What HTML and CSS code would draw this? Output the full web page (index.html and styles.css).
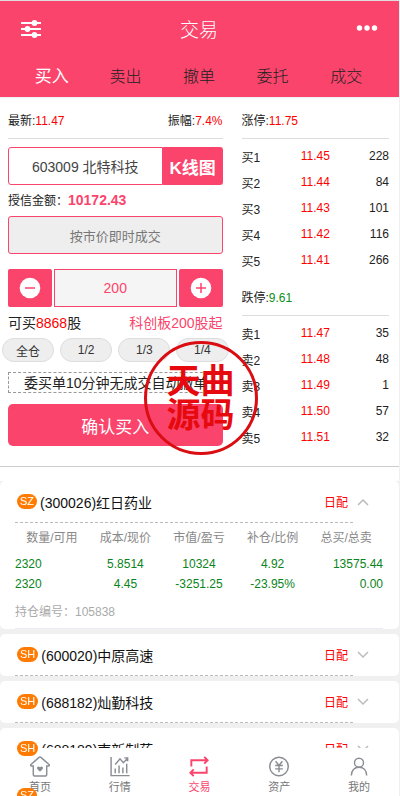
FILE: index.html
```html
<!DOCTYPE html>
<html lang="zh-CN">
<head>
    <meta charset="UTF-8">
    <meta name="viewport" content="width=device-width, initial-scale=1.0">
    <title>交易</title>
    <link rel="stylesheet" href="styles.css">
</head>
<body>
    <header class="header">
        <div class="title-bar">
            <button class="icon-btn" type="button" aria-label="设置">
                <svg width="22" height="18" viewBox="0 0 22 18" fill="#fff" stroke="#fff" stroke-width="2">
                    <path d="M1 3h20M1 9h20M1 15h20"/>
                    <circle cx="14.500" cy="3" r="1.900"/>
                    <circle cx="7.500" cy="9" r="1.900"/>
                    <circle cx="14.500" cy="15" r="1.900"/>
                </svg>
            </button>
            <h1>交易</h1>
            <button class="icon-btn" type="button" aria-label="更多">
                <svg width="22" height="18" viewBox="0 0 22 18" fill="#fff">
                    <circle cx="3.500" cy="8" r="2.700"/>
                    <circle cx="11" cy="8" r="2.700"/>
                    <circle cx="18.500" cy="8" r="2.700"/>
                </svg>
            </button>
        </div>
        <nav class="tabs">
            <a class="active" href="#buy">买入</a>
            <a href="#sell">卖出</a>
            <a href="#cancel">撤单</a>
            <a href="#orders">委托</a>
            <a href="#deals">成交</a>
        </nav>
    </header>

    <main class="content">
        <section class="trade">
            <form class="order">
                <div class="quote">
                    <span>最新:<span class="red">11.47</span></span>
                    <span>振幅:<span class="red">7.4%</span></span>
                </div>
                <div class="stock">
                    <input type="text" value="603009 北特科技" aria-label="股票代码">
                    <button type="button">K线图</button>
                </div>
                <p class="credit">授信金额：<b>10172.43</b></p>
                <input class="price" type="text" value="按市价即时成交" aria-label="委托价格" readonly>
                <div class="stepper">
                    <button type="button" aria-label="减少">
                        <svg width="22" height="22" viewBox="0 0 22 22">
                            <circle cx="11" cy="11" r="10.300" fill="#fff"/>
                            <path d="M6 11h10" stroke="#fb446c" stroke-width="1.500"/>
                        </svg>
                    </button>
                    <input type="text" value="200" aria-label="委托数量">
                    <button type="button" aria-label="增加">
                        <svg width="22" height="22" viewBox="0 0 22 22">
                            <circle cx="11" cy="11" r="10.300" fill="#fff"/>
                            <path d="M6 11h10M11 6v10" stroke="#fb446c" stroke-width="1.500"/>
                        </svg>
                    </button>
                </div>
                <div class="available">
                    <span>可买<span class="red">8868</span>股</span>
                    <span class="pink">科创板200股起</span>
                </div>
                <div class="portions">
                    <button type="button">全仓</button>
                    <button type="button">1/2</button>
                    <button type="button">1/3</button>
                    <button type="button">1/4</button>
                </div>
                <p class="notice">委买单10分钟无成交自动撤单</p>
                <button class="confirm" type="button">确认买入</button>
            </form>

            <div class="book">
                <div class="quote"><span>涨停:<span class="red">11.75</span></span></div>
                <table>
                    <tr><th>买1</th><td>11.45</td><td>228</td></tr>
                    <tr><th>买2</th><td>11.44</td><td>84</td></tr>
                    <tr><th>买3</th><td>11.43</td><td>101</td></tr>
                    <tr><th>买4</th><td>11.42</td><td>116</td></tr>
                    <tr><th>买5</th><td>11.41</td><td>266</td></tr>
                </table>
                <div class="quote lower"><span>跌停:<span class="green">9.61</span></span></div>
                <table>
                    <tr><th>卖1</th><td>11.47</td><td>35</td></tr>
                    <tr><th>卖2</th><td>11.48</td><td>48</td></tr>
                    <tr><th>卖3</th><td>11.49</td><td>1</td></tr>
                    <tr><th>卖4</th><td>11.50</td><td>57</td></tr>
                    <tr><th>卖5</th><td>11.51</td><td>32</td></tr>
                </table>
            </div>

            <div class="stamp">天曲<br>源码</div>
        </section>

        <section class="holdings">
            <article class="card">
                <div class="card-head">
                    <div class="card-name">
                        <span class="badge">SZ</span>
                        <span class="name">(300026)红日药业</span>
                        <span class="tag">日配</span>
                    </div>
                    <button type="button" aria-label="收起">
                        <svg width="12" height="8" viewBox="0 0 12 8"><path d="M1 7l5-5 5 5"/></svg>
                    </button>
                </div>
                <table class="detail">
                    <thead>
                        <tr><th>数量/可用</th><th>成本/现价</th><th>市值/盈亏</th><th>补仓/比例</th><th>总买/总卖</th></tr>
                    </thead>
                    <tbody>
                        <tr><td>2320</td><td>5.8514</td><td>10324</td><td>4.92</td><td>13575.44</td></tr>
                        <tr><td>2320</td><td>4.45</td><td>-3251.25</td><td>-23.95%</td><td>0.00</td></tr>
                    </tbody>
                </table>
                <p class="serial">持仓编号：105838</p>
            </article>
            <article class="card">
                <div class="card-head">
                    <div class="card-name">
                        <span class="badge">SH</span>
                        <span class="name">(600020)中原高速</span>
                        <span class="tag">日配</span>
                    </div>
                    <button type="button" aria-label="展开">
                        <svg width="12" height="8" viewBox="0 0 12 8"><path d="M1 1l5 5 5-5"/></svg>
                    </button>
                </div>
            </article>
            <article class="card">
                <div class="card-head">
                    <div class="card-name">
                        <span class="badge">SH</span>
                        <span class="name">(688182)灿勤科技</span>
                        <span class="tag">日配</span>
                    </div>
                    <button type="button" aria-label="展开">
                        <svg width="12" height="8" viewBox="0 0 12 8"><path d="M1 1l5 5 5-5"/></svg>
                    </button>
                </div>
            </article>
            <article class="card">
                <div class="card-head">
                    <div class="card-name">
                        <span class="badge">SH</span>
                        <span class="name">(688189)南新制药</span>
                        <span class="tag">日配</span>
                    </div>
                    <button type="button" aria-label="展开">
                        <svg width="12" height="8" viewBox="0 0 12 8"><path d="M1 1l5 5 5-5"/></svg>
                    </button>
                </div>
            </article>
            <article class="card">
                <div class="card-head">
                    <div class="card-name">
                        <span class="badge">SZ</span>
                    </div>
                </div>
            </article>
        </section>
    </main>

    <nav class="tabbar">
        <a href="#home">
            <svg width="24" height="24" viewBox="0 0 24 24">
                <path d="M5 11.500H3.200c-1 0-1.300-.8-.6-1.500L11 2.500c.6-.6 1.400-.6 2 0l8.400 7.500c.7.700.4 1.500-.6 1.500H19V20c0 1.300-.7 2-2 2H7c-1.300 0-2-.7-2-2z"/>
                <path class="solid" d="M12 17.500l-2.600-2.600c-1.600-1.800.9-3.900 2.600-2.100 1.700-1.800 4.200.3 2.600 2.100z"/>
            </svg>
            首页
        </a>
        <a href="#market">
            <svg width="24" height="24" viewBox="0 0 24 24">
                <path d="M2.700 2v19.500H22M7 10l5-6 3.500 4L20 3.500M16.500 3H20v3.500M7 19v-5M11 19v-8M15 19v-6M19 19V9"/>
            </svg>
            行情
        </a>
        <a class="active" href="#trade">
            <svg width="24" height="24" viewBox="0 0 24 24">
                <path d="M4 12V5.500h17M17.500 2L21 5.500 17.500 9M20 12v6.500H3M6.500 15L3 18.500 6.500 22"/>
            </svg>
            交易
        </a>
        <a href="#assets">
            <svg width="24" height="24" viewBox="0 0 24 24">
                <circle cx="12" cy="12" r="9.700"/>
                <path d="M8.500 6.500L12 11l3.500-4.500M12 11v7M8 11h8M8 14.500h8"/>
            </svg>
            资产
        </a>
        <a href="#me">
            <svg width="24" height="24" viewBox="0 0 24 24">
                <circle cx="12" cy="8" r="4.700"/>
                <path d="M4 21.500c0-5.500 3.200-8.800 8-8.800s8 3.300 8 8.800"/>
            </svg>
            我的
        </a>
    </nav>
</body>
</html>
```
FILE: styles.css
```css
* {
    box-sizing: border-box;
}
body {
    margin: 0;
    height: 100vh;
    display: flex;
    flex-direction: column;
    overflow: hidden;
    border-right: 1px solid #f0f0f0;
    background: #fff;
    color: #222;
    font-family: "Liberation Sans", "Noto Sans CJK SC", sans-serif;
    font-size: 12px;
}
h1, p {
    margin: 0;
    font-weight: 400;
}
a {
    text-decoration: none;
}
button, input {
    margin: 0;
    padding: 0;
    border: none;
    font-family: inherit;
}
input {
    min-width: 0;
    text-align: center;
    outline: none;
}
button {
    cursor: pointer;
}
svg {
    display: block;
}
.red {
    color: #f00;
}
.green {
    color: #0a8f14;
}
.pink {
    color: #fb446c;
}

/* header */
.header {
    flex: none;
    border-top: 1px solid #ddd;
    background: #fb446c;
    color: #fff;
    box-shadow: 0 1px 2px #e8eef5;
}
.title-bar {
    display: flex;
    align-items: center;
    justify-content: space-between;
    height: 55px;
    padding: 0 21px 0 20px;
}
.title-bar h1 {
    font-size: 19px;
    font-weight: 300;
}
.icon-btn {
    background: none;
}
.tabs {
    display: flex;
    height: 41px;
    padding: 0 16px 0 15px;
    line-height: 41px;
}
.tabs a {
    flex: 1;
    text-align: center;
    font-size: 16px;
    font-weight: 300;
    color: #222;
}
.tabs .active {
    font-size: 17px;
    font-weight: 400;
    color: #fff;
}

/* order form and order book */
.content {
    flex: 1;
    min-height: 0;
    overflow-y: auto;
    scrollbar-width: none;
}
.trade {
    position: relative;
    display: grid;
    grid-template-columns: 16fr 11fr;
    gap: 19px;
    padding: 7px 10px 16px 8px;
    border-bottom: 1px solid #ccc;
}
.order, .book {
    min-width: 0;
}
.quote {
    display: flex;
    justify-content: space-between;
    height: 35px;
    line-height: 34px;
    border-bottom: 1px solid #ddd;
}
.stock {
    display: flex;
    height: 38px;
    margin-top: 8px;
}
.stock input {
    flex: 1;
    border: 1px solid #fb446c;
    border-radius: 3px 0 0 3px;
    font-size: 14px;
    color: #444;
}
.stock button {
    width: 60px;
    border-radius: 0 3px 3px 0;
    background: #fb446c;
    color: #fff;
    font-size: 17px;
    font-weight: 700;
}
.credit {
    height: 31px;
    line-height: 31px;
}
.credit b {
    font-size: 14px;
    color: #fb446c;
}
.price {
    display: block;
    width: 100%;
    height: 38px;
    border: 1px solid #fb446c;
    border-radius: 3px;
    background: #eee;
    color: #777;
    font-size: 13px;
}
.stepper {
    display: flex;
    gap: 2px;
    height: 38px;
    margin-top: 15px;
}
.stepper input {
    flex: 1;
    border: 1px solid #fb446c;
    background: #f5f5f5;
    color: #fb446c;
    font-size: 14px;
}
.stepper button {
    display: flex;
    align-items: center;
    justify-content: center;
    width: 44px;
    border-radius: 2px;
    background: #fb446c;
}
.available {
    display: flex;
    justify-content: space-between;
    height: 31px;
    line-height: 33px;
    font-size: 14px;
}
.portions {
    display: flex;
    gap: 6px;
    margin: 0 -6px;
}
.portions button {
    flex: 1;
    height: 24px;
    border: 1px solid #ddd;
    border-radius: 12px;
    background: #eee;
    color: #333;
    font-size: 12px;
}
.notice {
    height: 21px;
    margin-top: 10px;
    padding-left: 15px;
    border: 1px dashed #999;
    line-height: 20px;
    font-size: 14px;
    white-space: nowrap;
}
.confirm {
    width: 100%;
    height: 42px;
    margin-top: 11px;
    border-radius: 5px;
    background: #fb446c;
    color: #fff;
    font-size: 17px;
}
.book table {
    width: 100%;
    margin-top: 4px;
    border-collapse: collapse;
    table-layout: fixed;
}
.book th, .book td {
    height: 26px;
    padding: 0;
    font-weight: 400;
    text-align: right;
}
.book th {
    text-align: left;
}
.book td:nth-child(2) {
    text-align: center;
    color: #f00;
}
.lower {
    margin-top: 8px;
}
.stamp {
    position: absolute;
    left: calc(50% - 56px);
    bottom: 11px;
    width: 114px;
    height: 114px;
    padding-top: 20px;
    border: 3px solid #d90d12;
    border-radius: 50%;
    color: #e60a0f;
    font-size: 34px;
    line-height: 34px;
    font-weight: 700;
    text-align: center;
    pointer-events: none;
}

/* holdings */
.holdings {
    display: flex;
    flex-direction: column;
    gap: 5px;
    margin-top: 14px;
    background: #f0f0f0;
}
.card {
    padding: 0 16px 0 15px;
    border-radius: 5px;
    background: #fff;
}
.card-head {
    display: flex;
}
.card-name {
    flex: 1;
    display: flex;
    align-items: center;
    height: 42px;
    padding: 0 5px 0 2px;
    border-bottom: 1px dashed #bbb;
}
.card-head button {
    width: 30px;
    padding-left: 4px;
    background: none;
}
.card-head svg {
    fill: none;
    stroke: #bbb;
    stroke-width: 1.5px;
}
.badge {
    position: relative;
    z-index: 2;
    padding: 0 3px;
    border-radius: 8px;
    background: #ff7a00;
    color: #fff;
    font-size: 11px;
    line-height: 15px;
}
.name {
    margin-left: 3px;
    font-size: 14px;
    color: #111;
}
.tag {
    margin-left: auto;
    color: #f00;
}
.detail {
    width: 100%;
    border-collapse: collapse;
    table-layout: fixed;
}
.detail th {
    height: 31px;
    padding: 0 0 4px;
    color: #888;
    font-weight: 400;
}
.detail td {
    height: 20px;
    padding: 0;
    text-align: center;
    color: #0a8420;
}
.detail td:first-child {
    text-align: left;
}
.detail td:last-child {
    text-align: right;
}
.serial {
    padding: 8px 0 6px;
    border-bottom: 1px solid #ececf2;
    line-height: 20px;
    color: #aaa;
}

/* bottom bar */
.tabbar {
    position: fixed;
    left: 0;
    right: 1px;
    bottom: 0;
    z-index: 1;
    display: flex;
    height: 48px;
    padding-top: 7px;
    background: #fff;
}
.tabbar a {
    flex: 1;
    display: flex;
    flex-direction: column;
    align-items: center;
    color: #777;
    font-size: 11px;
    line-height: 18px;
}
.tabbar svg {
    fill: none;
    stroke: #8b8d94;
    stroke-width: 1.5px;
}
.tabbar .solid {
    fill: #8b8d94;
    stroke: none;
}
.tabbar .active {
    color: #fb446c;
}
.tabbar .active svg {
    stroke: #fb446c;
    stroke-width: 2px;
}
```
